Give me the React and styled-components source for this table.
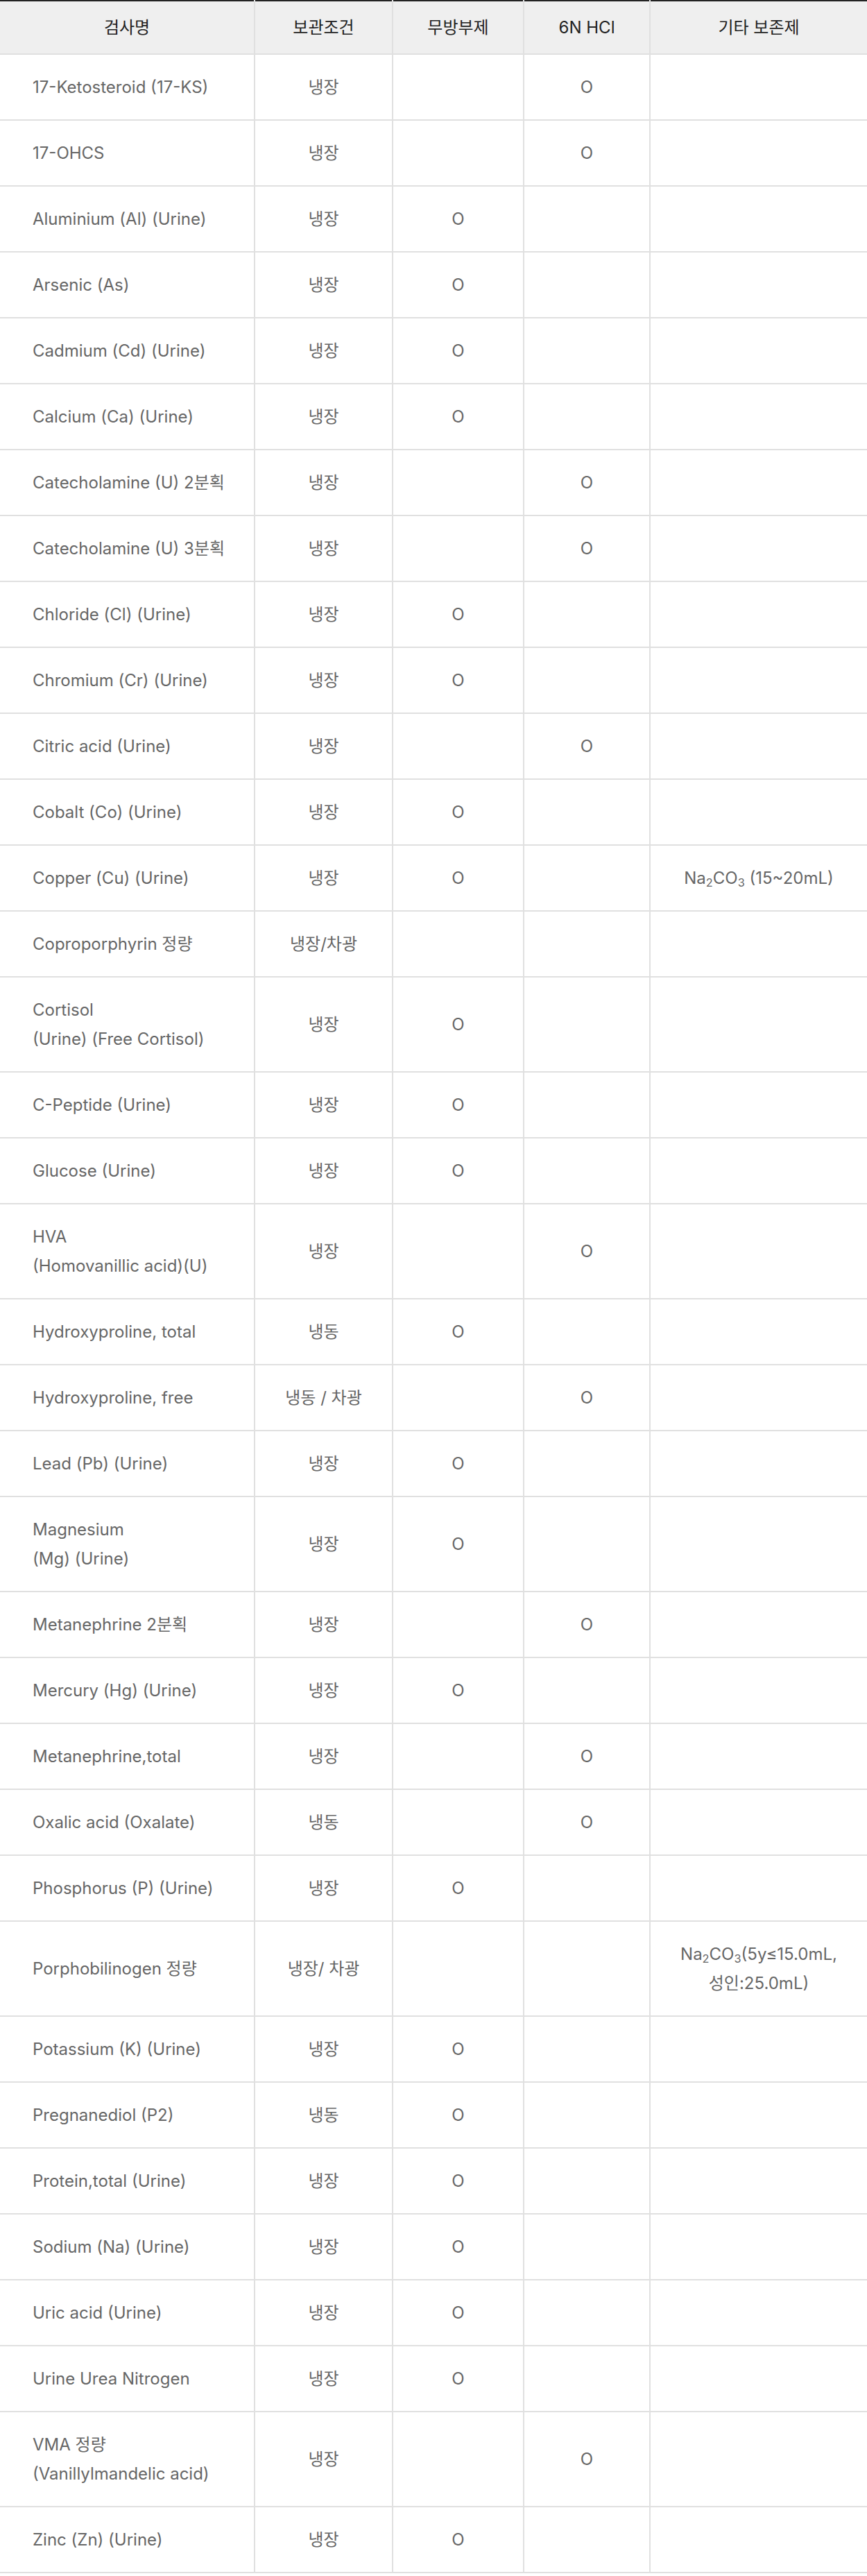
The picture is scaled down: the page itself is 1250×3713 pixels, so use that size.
import styled, { createGlobalStyle } from 'styled-components';

const GlobalStyle = createGlobalStyle`
    body {
        margin: 0;
        background: #fff;
        font-family: Inter, "Noto Sans CJK KR", sans-serif;
    }
`;

const Table = styled.table`
    width: 1250px;
    border-collapse: collapse;
    table-layout: fixed;
    border-top: 2px solid #222;
    font-size: 24px;
    line-height: 42px;
`;

const Th = styled.th`
    background-color: #efefef;
    color: #222;
    font-weight: 400;
    padding: 16.5px 10px;
    border-bottom: 2px solid #e0e0e0;
    border-left: 2px solid #e0e0e0;
    &:first-child { border-left: none; }
`;

const Td = styled.td`
    color: #666;
    padding: 25.5px 10px;
    text-align: ${props => props.left ? "left" : "center"};
    padding-left: ${props => props.left ? "47px" : "10px"};
    border-bottom: 2px solid #e0e0e0;
    border-left: 2px solid #e0e0e0;
    &:first-child { border-left: none; }
`;

const Sub = styled.span`
    font-size: 0.68em;
    position: relative;
    top: 0.3em;
    line-height: 0;
`;

const Na2CO3 = () => <>Na<Sub>2</Sub>CO<Sub>3</Sub></>;

const rows = [
    ["17-Ketosteroid (17-KS)", "냉장", false, true],
    ["17-OHCS", "냉장", false, true],
    ["Aluminium (Al) (Urine)", "냉장", true, false],
    ["Arsenic (As)", "냉장", true, false],
    ["Cadmium (Cd) (Urine)", "냉장", true, false],
    ["Calcium (Ca) (Urine)", "냉장", true, false],
    ["Catecholamine (U) 2분획", "냉장", false, true],
    ["Catecholamine (U) 3분획", "냉장", false, true],
    ["Chloride (Cl) (Urine)", "냉장", true, false],
    ["Chromium (Cr) (Urine)", "냉장", true, false],
    ["Citric acid (Urine)", "냉장", false, true],
    ["Cobalt (Co) (Urine)", "냉장", true, false],
    ["Copper (Cu) (Urine)", "냉장", true, false, <><Na2CO3 /> (15~20mL)</>],
    ["Coproporphyrin 정량", "냉장/차광", false, false],
    [["Cortisol", "(Urine) (Free Cortisol)"], "냉장", true, false],
    ["C-Peptide (Urine)", "냉장", true, false],
    ["Glucose (Urine)", "냉장", true, false],
    [["HVA", "(Homovanillic acid)(U)"], "냉장", false, true],
    ["Hydroxyproline, total", "냉동", true, false],
    ["Hydroxyproline, free", "냉동 / 차광", false, true],
    ["Lead (Pb) (Urine)", "냉장", true, false],
    [["Magnesium", "(Mg) (Urine)"], "냉장", true, false],
    ["Metanephrine 2분획", "냉장", false, true],
    ["Mercury (Hg) (Urine)", "냉장", true, false],
    ["Metanephrine,total", "냉장", false, true],
    ["Oxalic acid (Oxalate)", "냉동", false, true],
    ["Phosphorus (P) (Urine)", "냉장", true, false],
    ["Porphobilinogen 정량", "냉장/ 차광", false, false, <><Na2CO3 />(5y≤15.0mL,<br />성인:25.0mL)</>],
    ["Potassium (K) (Urine)", "냉장", true, false],
    ["Pregnanediol (P2)", "냉동", true, false],
    ["Protein,total (Urine)", "냉장", true, false],
    ["Sodium (Na) (Urine)", "냉장", true, false],
    ["Uric acid (Urine)", "냉장", true, false],
    ["Urine Urea Nitrogen", "냉장", true, false],
    [["VMA 정량", "(Vanillylmandelic acid)"], "냉장", false, true],
    ["Zinc (Zn) (Urine)", "냉장", true, false],
];

const App = () => {
    return (
        <>
            <GlobalStyle />
            <Table>
                <colgroup>
                    <col style={{ width: "367px" }} />
                    <col style={{ width: "199px" }} />
                    <col style={{ width: "189px" }} />
                    <col style={{ width: "182px" }} />
                    <col />
                </colgroup>
                <thead>
                    <tr>
                        <Th>검사명</Th>
                        <Th>보관조건</Th>
                        <Th>무방부제</Th>
                        <Th>6N HCl</Th>
                        <Th>기타 보존제</Th>
                    </tr>
                </thead>
                <tbody>
                    {rows.map(([name, storage, plain, hcl, other], i) => (
                        <tr key={i}>
                            <Td left>
                                {Array.isArray(name)
                                    ? name.map((line, j) => <div key={j}>{line}</div>)
                                    : name}
                            </Td>
                            <Td>{storage}</Td>
                            <Td>{plain ? "O" : ""}</Td>
                            <Td>{hcl ? "O" : ""}</Td>
                            <Td>{other}</Td>
                        </tr>
                    ))}
                </tbody>
            </Table>
        </>
    );
};

export default App;
